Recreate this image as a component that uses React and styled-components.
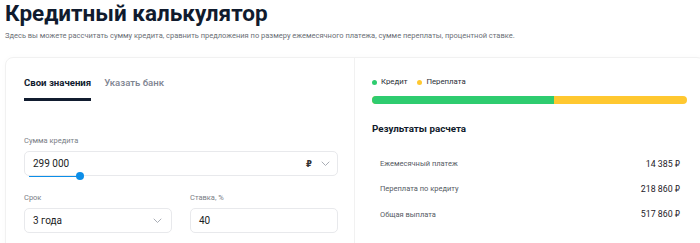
import React from "react";
import styled, { createGlobalStyle } from "styled-components";

const Global = createGlobalStyle`
  html, body { margin: 0; padding: 0; background: #fff; overflow: hidden; }
  body { font-family: Roboto, "Noto Sans", "DejaVu Sans", sans-serif; color: #0f1a2c; }
  * { box-sizing: border-box; }
`;

const Page = styled.div`
  padding: 0 5px;
  width: 710px;
  height: 243px;
  overflow: hidden;
`;

const Title = styled.h1`
  margin: 0;
  font-size: 22.5px;
  line-height: 26px;
  font-weight: 700;
  color: #101b2e;
`;

const Subtitle = styled.p`
  margin: 4px 0 0;
  font-size: 7.5px;
  line-height: 12px;
  color: #6b6f76;
`;

const Card = styled.div`
  margin-top: 15px;
  width: 700px;
  height: 200px;
  border: 1px solid #f1f1f1;
  border-radius: 8px;
  display: grid;
  grid-template-columns: 349px 1fr;
  box-shadow: 0 0 6px rgba(0, 0, 0, 0.02);
`;

const LeftPanel = styled.div`
  padding: 0 16px 0 18px;
  border-right: 1px solid #f1f1f1;
`;

const Tabs = styled.div`
  display: flex;
  gap: 13px;
`;

const Tab = styled.div`
  padding-top: 18px;
  padding-bottom: 8px;
  font-size: 9.6px;
  line-height: 14px;
  font-weight: ${(p) => (p.$active ? 700 : 500)};
  color: ${(p) => (p.$active ? "#111c2f" : "#7d8390")};
  border-bottom: 3px solid ${(p) => (p.$active ? "#111c2f" : "transparent")};
`;

const FieldLabel = styled.div`
  font-size: 7.5px;
  line-height: 12px;
  color: #7a7e86;
  margin-bottom: 4px;
`;

const Field = styled.div`
  margin-top: ${(p) => p.$mt || 0}px;
`;

const Box = styled.div`
  position: relative;
  height: 25px;
  border: 1px solid #e8e9ec;
  border-radius: 5px;
  display: flex;
  align-items: center;
  padding: 0 ${(p) => p.$pr || 7}px 0 8px;
  font-size: 10px;
  color: #1a1d24;
`;

const Value = styled.span`
  flex: 1;
`;

const Currency = styled.span`
  font-family: "DejaVu Sans", sans-serif;
  font-weight: 700;
  font-size: 8.5px;
  color: #333;
  margin-right: 9px;
`;

const Slider = styled.div`
  position: absolute;
  left: 4px;
  bottom: -2px;
  width: 51px;
  height: 1.5px;
  background: #0c8ee8;
`;

const Thumb = styled.div`
  position: absolute;
  right: -4px;
  top: -3.5px;
  width: 8px;
  height: 8px;
  border-radius: 50%;
  background: #0c8ee8;
`;

const Row2 = styled.div`
  display: grid;
  grid-template-columns: 148px 148px;
  column-gap: 18px;
  margin-top: 16px;
`;

const RightPanel = styled.div`
  padding: 18px 17px 0 17px;
`;

const Legend = styled.div`
  display: flex;
  gap: 10px;
  font-size: 7.8px;
  line-height: 12px;
  color: #2a2e36;
`;

const LegendItem = styled.div`
  display: flex;
  align-items: center;
  gap: 4px;
  &::before {
    content: "";
    width: 5px;
    height: 5px;
    border-radius: 50%;
    background: ${(p) => p.$color};
  }
`;

const Bar = styled.div`
  margin-top: 8px;
  height: 8px;
  border-radius: 4px;
  overflow: hidden;
  display: flex;
  background: #ffc830;
`;

const BarPart = styled.div`
  background: ${(p) => p.$color};
  height: 100%;
`;

const ResultsTitle = styled.h2`
  margin: 18px 0 0;
  font-size: 9.8px;
  line-height: 14px;
  font-weight: 700;
  color: #111a2b;
`;

const Rows = styled.div`
  margin-top: 15px;
  padding: 0 7px 0 8px;
`;

const ResultRow = styled.div`
  height: 25.3px;
  display: flex;
  align-items: center;
  justify-content: space-between;
`;

const RowLabel = styled.span`
  font-size: 7.5px;
  color: #555a63;
`;

const RowValue = styled.span`
  font-size: 8.8px;
  color: #1d2027;
`;

const Rub = styled.span`
  font-family: "DejaVu Sans", sans-serif;
  font-size: 8.2px;
`;

const Chevron = () => (
  <svg width="9" height="6" viewBox="0 0 9 6" fill="none">
    <path d="M1 1l3.5 3.5L8 1" stroke="#a9adb5" strokeWidth="1" strokeLinecap="round" strokeLinejoin="round" />
  </svg>
);

export default function App() {
  return (
    <>
      <Global />
      <Page>
        <Title>Кредитный калькулятор</Title>
        <Subtitle>
          Здесь вы можете рассчитать сумму кредита, сравнить предложения по размеру ежемесячного платежа, сумме переплаты, процентной ставке.
        </Subtitle>
        <Card>
          <LeftPanel>
            <Tabs>
              <Tab $active>Свои значения</Tab>
              <Tab>Указать банк</Tab>
            </Tabs>
            <Field $mt={34}>
              <FieldLabel>Сумма кредита</FieldLabel>
              <Box $pr={7}>
                <Value>299 000</Value>
                <Currency>₽</Currency>
                <Chevron />
                <Slider>
                  <Thumb />
                </Slider>
              </Box>
            </Field>
            <Row2>
              <Field>
                <FieldLabel>Срок</FieldLabel>
                <Box $pr={9}>
                  <Value>3 года</Value>
                  <Chevron />
                </Box>
              </Field>
              <Field>
                <FieldLabel>Ставка, %</FieldLabel>
                <Box>
                  <Value>40</Value>
                </Box>
              </Field>
            </Row2>
          </LeftPanel>
          <RightPanel>
            <Legend>
              <LegendItem $color="#2ecc6f">Кредит</LegendItem>
              <LegendItem $color="#ffc830">Переплата</LegendItem>
            </Legend>
            <Bar>
              <BarPart $color="#2ecc6f" style={{ width: `${(299000 / 517860) * 100}%` }} />
            </Bar>
            <ResultsTitle>Результаты расчета</ResultsTitle>
            <Rows>
              <ResultRow>
                <RowLabel>Ежемесячный платеж</RowLabel>
                <RowValue>14 385 <Rub>₽</Rub></RowValue>
              </ResultRow>
              <ResultRow>
                <RowLabel>Переплата по кредиту</RowLabel>
                <RowValue>218 860 <Rub>₽</Rub></RowValue>
              </ResultRow>
              <ResultRow>
                <RowLabel>Общая выплата</RowLabel>
                <RowValue>517 860 <Rub>₽</Rub></RowValue>
              </ResultRow>
            </Rows>
          </RightPanel>
        </Card>
      </Page>
    </>
  );
}
